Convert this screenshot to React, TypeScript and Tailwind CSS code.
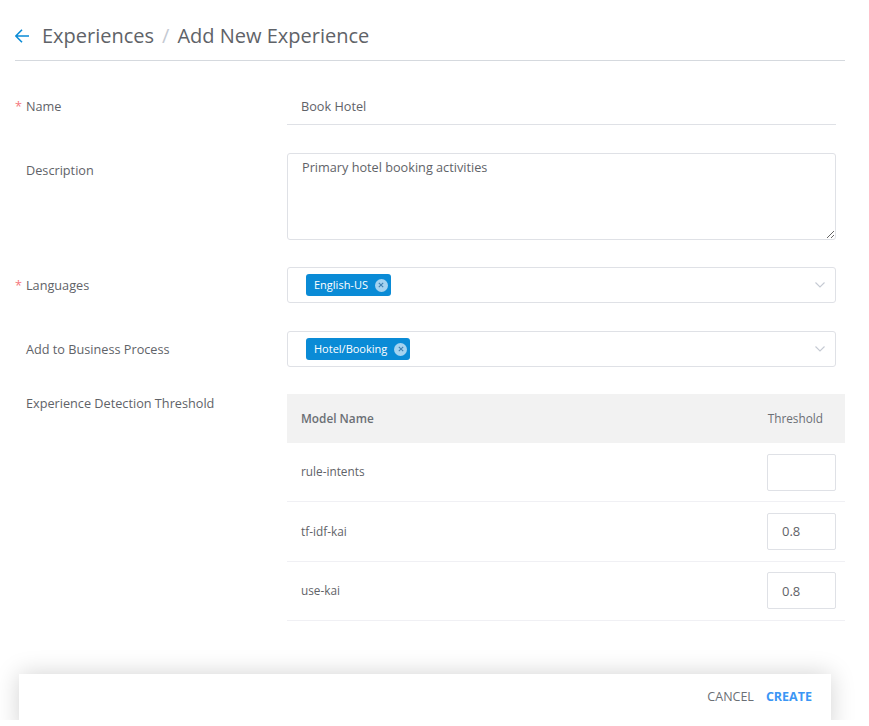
const models = [
  { name: "rule-intents", value: "" },
  { name: "tf-idf-kai", value: "0.8" },
  { name: "use-kai", value: "0.8" },
];

function Label({ text, required }: { text: string; required?: boolean }) {
  return (
    <div className="w-[272px] shrink-0 text-[12.7px] text-[#5f6368] leading-[18px] flex">
      <span className="w-[11px] text-[#f5787c]">{required ? "*" : ""}</span>
      <span>{text}</span>
    </div>
  );
}

function Tag({ text }: { text: string }) {
  return (
    <span className="h-[22px] bg-[#0a8bd6] rounded-[3px] pl-2 pr-[3px] flex items-center gap-[7px] text-[11px] text-white">
      {text}
      <span className="w-[13px] h-[13px] rounded-full bg-[#a5d3f0] flex items-center justify-center">
        <svg width="6" height="6" viewBox="0 0 6 6" fill="none" stroke="#3f7fb0" strokeWidth="1.1">
          <path d="M0.8 0.8 5.2 5.2M5.2 0.8 0.8 5.2" />
        </svg>
      </span>
    </span>
  );
}

function TagSelect({ text }: { text: string }) {
  return (
    <div className="w-[549px] h-[36px] border border-[#dfe1e6] rounded-[3px] pl-[18px] pr-[10px] flex items-center justify-between">
      <Tag text={text} />
      <svg width="10" height="6" viewBox="0 0 10 6" fill="none" stroke="#c5cad3" strokeWidth="1.1">
        <path d="M0.5 0.5 5 5 9.5 0.5" />
      </svg>
    </div>
  );
}

export default function App() {
  return (
    <div className="w-[869px] h-[726px] bg-white font-['Open_Sans',sans-serif] overflow-hidden">
      <div className="ml-[15px] w-[830px] h-[61px] border-b border-[#d5d9de] flex items-center pt-[11px]">
        <svg width="14" height="14" viewBox="0 0 14 14" fill="none" stroke="#0a8bd6" strokeWidth="1.6" className="mr-[13px]">
          <path d="M0.8 7H14M7 0.8 0.8 7 7 13.2" />
        </svg>
        <span className="text-[20px] text-[#5f6368]">Experiences</span>
        <span className="text-[20px] text-[#c5cad3] mx-[8px]">/</span>
        <span className="text-[20px] text-[#5f6368]">Add New Experience</span>
      </div>

      <div className="ml-[15px] mt-[26px] flex items-start">
        <div className="pt-[10px]"><Label text="Name" required /></div>
        <div className="w-[549px] h-[38px] border-b border-[#dfe1e6] pl-[14px] pt-[2px] flex items-center text-[12.7px] text-[#5f6368]">
          Book Hotel
        </div>
      </div>

      <div className="ml-[15px] mt-[28px] flex items-start">
        <div className="pt-[8px]"><Label text="Description" /></div>
        <textarea
          readOnly
          value="Primary hotel booking activities"
          className="w-[549px] h-[87px] border border-[#dfe1e6] rounded-[3px] px-[14px] py-[3px] text-[12.7px] leading-[20px] text-[#5f6368] outline-none block"
        />
      </div>

      <div className="ml-[15px] mt-[27px] flex items-center">
        <Label text="Languages" required />
        <TagSelect text="English-US" />
      </div>

      <div className="ml-[15px] mt-[28px] flex items-center">
        <Label text="Add to Business Process" />
        <TagSelect text="Hotel/Booking" />
      </div>

      <div className="ml-[15px] mt-[27px] flex items-start">
        <Label text="Experience Detection Threshold" />
        <div className="w-[558px]">
          <div className="h-[49px] bg-[#f2f2f2] pl-[14px] pr-[22px] flex items-center justify-between text-[11.8px] text-[#6b6f75]">
            <span className="font-semibold">Model Name</span>
            <span>Threshold</span>
          </div>
          {models.map((m) => (
            <div key={m.name} className="h-[59.33px] border-b border-[#f0f0f4] pl-[14px] pr-[9px] flex items-center justify-between text-[11.8px] text-[#5f6368]">
              <span>{m.name}</span>
              <input
                readOnly
                value={m.value}
                className="w-[69px] h-[37px] border border-[#dfe1e6] rounded-[2px] px-[14px] text-[13px] text-[#5f6368] outline-none"
              />
            </div>
          ))}
        </div>
      </div>

      <div className="mt-[23px] h-[76px] overflow-hidden pt-[30px] px-[19px]">
        <div className="w-[812px] h-[60px] bg-white shadow-[0_0_24px_rgba(0,0,0,0.18)] flex items-start justify-end gap-[12px] pr-[19px] pt-[14px] text-[12.5px] leading-[18px]">
          <span className="text-[#6b6f75]">CANCEL</span>
          <span className="font-bold text-[#3b96f5]">CREATE</span>
        </div>
      </div>
    </div>
  );
}
